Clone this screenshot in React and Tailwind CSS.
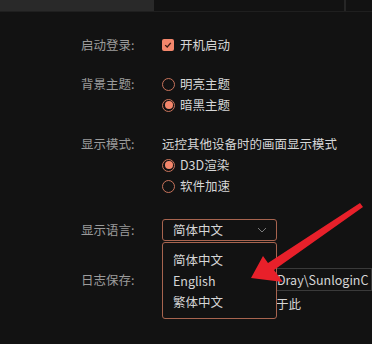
import { useState } from "react";

const font = { fontFamily: '"Noto Sans CJK SC", "Noto Sans", sans-serif' };

function Radio({ checked }) {
  return (
    <span className="w-[13px] h-[13px] rounded-full border-[1.5px] border-[#c8735b] flex items-center justify-center shrink-0">
      {checked && <span className="w-[8px] h-[8px] rounded-full bg-[#f4876c]" />}
    </span>
  );
}

function Row({ label, children, className = "" }) {
  return (
    <div className={`flex items-center ${className}`}>
      <span className="w-[81px] text-[#9b9b9b]">{label}</span>
      {children}
    </div>
  );
}

export default function App() {
  const [lang] = useState("简体中文");

  return (
    <div
      className="w-[372px] h-[344px] bg-[#121212] overflow-hidden relative text-[12.5px] leading-[20px]"
      style={font}
    >
      {/* top tabs */}
      <div className="h-[12px] flex border-b border-[#1f1f1f]">
        <div className="w-[154px] bg-[#292929]" />
        <div className="w-[190px]" />
        <div className="w-[2px] bg-[#262626]" />
        <div className="flex-1" />
      </div>

      <div className="pl-[81px] pt-[23px] text-[#d6d6d6]">
        <Row label="启动登录:">
          <span className="flex items-center gap-[6px]">
            <span className="w-[12px] h-[12px] rounded-[2px] bg-[#f4876c] flex items-center justify-center">
              <svg width="8" height="8" viewBox="0 0 8 8">
                <path d="M1.2 4.1 L3.2 6 L6.8 1.8" fill="none" stroke="#3a1a12" strokeWidth="1.3" />
              </svg>
            </span>
            开机启动
          </span>
        </Row>

        <Row label="背景主题:" className="mt-[19px]">
          <span className="flex items-center gap-[5px]">
            <Radio />
            明亮主题
          </span>
        </Row>
        <div className="flex items-center gap-[5px] ml-[81px] mt-[1px]">
          <Radio checked />
          暗黑主题
        </div>

        <Row label="显示模式:" className="mt-[19px]">
          <span>远控其他设备时的画面显示模式</span>
        </Row>
        <div className="flex items-center gap-[5px] ml-[81px] mt-[1px]">
          <Radio checked />
          D3D渲染
        </div>
        <div className="flex items-center gap-[5px] ml-[81px] mt-[1px]">
          <Radio />
          软件加速
        </div>

        <Row label="显示语言:" className="mt-[23px]">
          <div className="relative">
            <div className="w-[115px] h-[22px] border border-[#a7644f] rounded-[3px] flex items-center justify-between pl-[10px] pr-[9px]">
              <span>{lang}</span>
              <svg width="10" height="6" viewBox="0 0 10 6">
                <path d="M1 1 L5 5 L9 1" fill="none" stroke="#7a7a7a" strokeWidth="1" />
              </svg>
            </div>
            {/* open dropdown */}
            <div className="absolute left-0 top-[23px] w-[115px] h-[77px] border border-[#a7644f] rounded-[3px] bg-[#121212] z-20 pl-[10px] pt-[7px] flex flex-col">
              <span className="h-[21px]">简体中文</span>
              <span className="h-[21px]">English</span>
              <span className="h-[21px]">繁体中文</span>
            </div>
          </div>
        </Row>

        <Row label="日志保存:" className="mt-[27px]">
          <div className="w-[210px] h-[23px] border border-[#3a3a3a] flex items-center overflow-hidden whitespace-nowrap">
            <span className="w-[114px] shrink-0" />
            <span>Dray\SunloginC</span>
          </div>
        </Row>
        <div className="ml-[81px] flex whitespace-nowrap mt-[3px]">
          <span className="w-[114px]" />
          <span>于此</span>
        </div>
      </div>

      {/* red annotation arrow */}
      <svg className="absolute left-0 top-0 z-30 pointer-events-none" width="372" height="344">
        <path
          d="M251 278 L263 256 L268 263 L360 203 L363 207 L274 270 L283 282 Z"
          fill="#e8202a"
        />
      </svg>
    </div>
  );
}
